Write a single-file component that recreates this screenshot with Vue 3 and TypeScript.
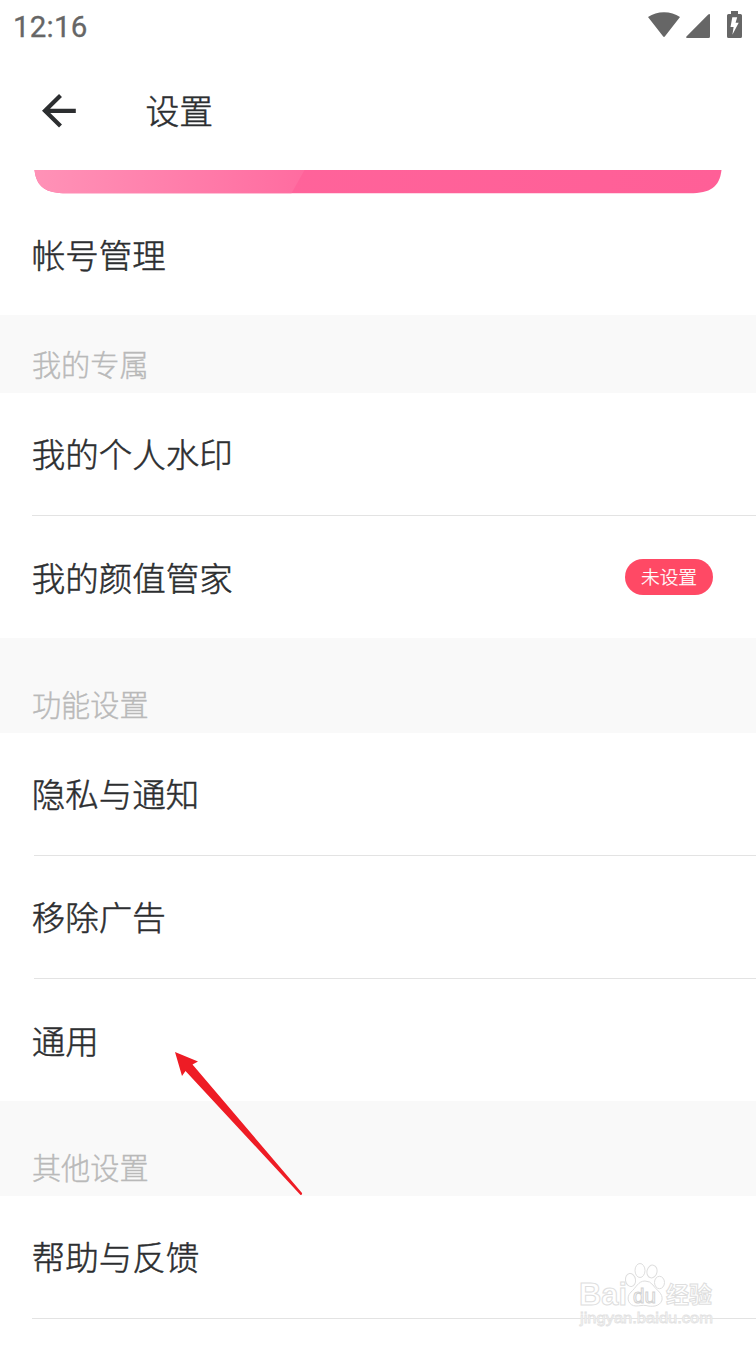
<script setup lang="ts">
interface Row {
  label: string
  badge?: string
}
interface Group {
  title: string
  kind: string
  rows: Row[]
}

const groups: Group[] = [
  { title: '我的专属', kind: 'short', rows: [{ label: '我的个人水印' }, { label: '我的颜值管家', badge: '未设置' }] },
  { title: '功能设置', kind: 'inset', rows: [{ label: '隐私与通知' }, { label: '移除广告' }, { label: '通用' }] },
  { title: '其他设置', kind: 'last', rows: [{ label: '帮助与反馈' }] },
]
</script>

<template>
  <main class="screen">
    <div class="status">
      <span class="clock">12:16</span>
      <svg class="status-icons" width="110" height="52" viewBox="646 0 110 52">
        <g fill="#666">
          <path d="M648 17Q655 12.200 664 12.200T680 17L665 36.300Q664 37.600 663 36.300Z" />
          <path d="M710 15V36.500Q710 38 708.500 38H687.500Q685 38 686.700 36.300L708 14.700Q710 13 710 15Z" />
          <path d="M731 11H738V14H740.500Q742 14 742 15.500V36.500Q742 38 740.500 38H728.500Q727 38 727 36.500V15.500Q727 14 728.500 14H731Z" />
        </g>
        <path d="M732.300 17.300H737.200L735.600 22.800H738.700L732.400 34.800L733.600 27H730.500Z" fill="#fff" />
      </svg>
    </div>

    <header class="header">
      <svg class="back" width="40" height="40" viewBox="38 91 40 40">
        <path d="M60.500 95.500L45 110.800L60.500 126M44 110.800H75.800" fill="none" stroke="#2c2e30" stroke-width="4.200" />
      </svg>
      <h1>设置</h1>
    </header>

    <div class="banner-row">
      <svg width="688" height="23.500" viewBox="-0.5 0 688 23.500">
        <defs>
          <linearGradient id="bannerLight">
            <stop offset="0" stop-color="#ff92b7" />
            <stop offset="1" stop-color="#ff6ca0" />
          </linearGradient>
          <linearGradient id="bannerDark">
            <stop offset="0" stop-color="#ff659c" />
            <stop offset="1" stop-color="#ff5f97" />
          </linearGradient>
        </defs>
        <path d="M0 0H687C685 17 676 23.300 655 23.300H32C11 23.300 2 17 0 0Z" fill="url(#bannerDark)" />
        <path d="M0 0H270L257 23.300H32C11 23.300 2 17 0 0Z" fill="url(#bannerLight)" />
      </svg>
    </div>

    <div class="row account"><span class="label">帐号管理</span></div>

    <section v-for="group in groups" :key="group.title" :class="['group', group.kind]">
      <h2>{{ group.title }}</h2>
      <div v-for="row in group.rows" :key="row.label" class="row">
        <span class="label">{{ row.label }}</span>
        <span v-if="row.badge" class="badge">{{ row.badge }}</span>
      </div>
    </section>

    <svg class="pointer" width="140" height="156" viewBox="170 1045 140 156">
      <path d="M175 1052L198 1061.500L192.500 1064.500L302 1193Q302.500 1195 300.500 1195L185.500 1071L182 1076Z" fill="#ee1c25" />
    </svg>

    <svg class="watermark" width="176" height="85" viewBox="570 1255 176 85">
      <g fill="#fff" stroke="#dedede" stroke-width="1">
        <text x="579" y="1305" class="brand" textLength="48" lengthAdjust="spacingAndGlyphs">Bai</text>
        <ellipse cx="630.500" cy="1280" rx="5" ry="6.500" transform="rotate(-10 630.500 1280)" />
        <ellipse cx="640" cy="1270.500" rx="5" ry="7" />
        <ellipse cx="652" cy="1271.500" rx="5" ry="6.500" transform="rotate(12 652 1271.500)" />
        <ellipse cx="659.500" cy="1282.500" rx="5" ry="6.200" />
        <path d="M645 1281C638 1281 636 1288 631 1292C625 1298 629 1306 636 1306C640 1306 642 1305 646 1305.500C651 1307 660 1307 662 1300C663 1293 657 1291 653 1285Q650 1281 645 1281Z" />
        <text x="633" y="1302.500" class="du" textLength="23" lengthAdjust="spacingAndGlyphs">du</text>
        <text x="666" y="1303" class="experience">经验</text>
        <text x="580" y="1322.500" class="address" textLength="133" lengthAdjust="spacingAndGlyphs">jingyan.baidu.com</text>
      </g>
    </svg>
  </main>
</template>

<style>
body { background: #fff; }
</style>

<style scoped>
.screen {
  position: relative;
  width: 756px;
  height: 1345px;
  overflow: hidden;
  background: #fff;
  color: #2c2e30;
  font-family: "Noto Sans CJK SC", sans-serif;
  font-weight: 300;
}
.status {
  height: 52px;
  display: flex;
  align-items: center;
  justify-content: space-between;
}
.clock {
  margin-left: 13px;
  padding-top: 2px;
  color: #666;
  font: 400 29.500px/52px Roboto, sans-serif;
  letter-spacing: .2px;
  -webkit-text-stroke: .3px #666;
}
.status-icons, .back, .banner-row svg { display: block; }
.header {
  height: 118px;
  display: flex;
  align-items: center;
  padding-left: 38px;
}
h1 {
  margin: 0 0 0 67.500px;
  padding-bottom: 2px;
  font-size: 33.800px;
  line-height: 50px;
  font-weight: 300;
  -webkit-text-stroke: .5px #2c2e30;
}
.banner-row {
  height: 23px;
  padding-left: 34px;
}
.row {
  box-sizing: border-box;
  height: 123px;
  display: flex;
  align-items: center;
  justify-content: space-between;
  padding: 0 43px 0 31.700px;
  font-size: 33.500px;
  line-height: 50px;
}
.label {
  padding-bottom: 3px;
  -webkit-text-stroke: .5px #2c2e30;
}
.account .label, .row:last-child .label { padding-bottom: 1px; }
.last .row:last-child .label { padding-bottom: 3px; }
.account, .row:last-child { height: 122px; }
.group .row:not(:last-child), .last .row {
  background: linear-gradient(#e3e3e3, #e3e3e3) 32px 100% / 724px 1px no-repeat;
}
.inset .row:not(:last-child) { background-position-x: 34px; }
.last .row { height: 123px; }
h2 {
  box-sizing: border-box;
  height: 95px;
  margin: 0;
  padding: 44px 0 0 31.900px;
  background: #f9f9f9;
  color: #b9b9b9;
  font-size: 29.200px;
  line-height: 43px;
  font-weight: 300;
  -webkit-text-stroke: .4px #b9b9b9;
}
.short h2 { height: 78px; padding-top: 27px; }
.badge {
  width: 88px;
  height: 36px;
  border-radius: 18px;
  background: #ff4965;
  color: #fff;
  font-size: 18.700px;
  line-height: 34px;
  text-align: center;
  -webkit-text-stroke: .25px #fff;
}
.pointer {
  position: absolute;
  left: 170px;
  top: 1045px;
}
.watermark {
  position: absolute;
  left: 570px;
  top: 1255px;
}
.brand { font: 700 31px "Liberation Sans", sans-serif; }
.du { font: 400 21px "Liberation Sans", sans-serif; stroke: #d2d2d2; }
.experience { font: 700 23px "Noto Sans CJK SC", sans-serif; }
.address { font: 400 15px "Liberation Sans", sans-serif; stroke: #e2e2e2; stroke-width: .8px; }
</style>
